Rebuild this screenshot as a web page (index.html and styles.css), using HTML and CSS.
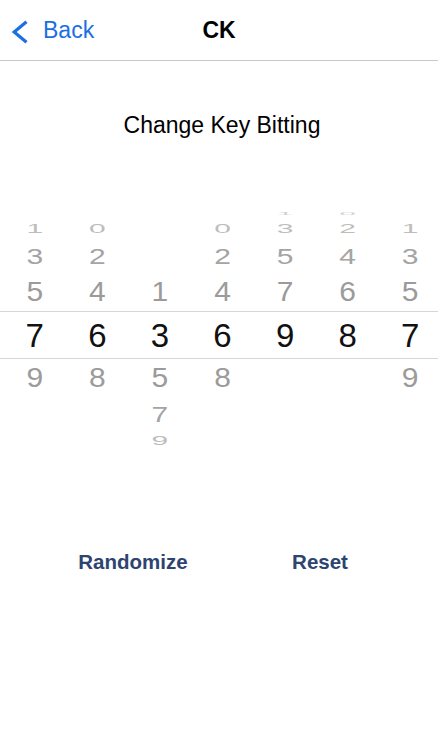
FILE: index.html
```html
<!DOCTYPE html>
<html>
<head>
<meta charset="utf-8">
<title>CK</title>
<link rel="stylesheet" href="styles.css">
</head>
<body>
<div class="nav">
  <div class="nav-left">
    <svg class="chev" viewBox="0 0 18 24" width="18" height="24"><polyline points="15.5,1.8 3.2,12 15.5,22.2" fill="none" stroke="#1a6fe3" stroke-width="3.2" stroke-linejoin="miter" stroke-linecap="butt"/></svg>
    <span class="back">Back</span>
  </div>
  <div class="nav-title">CK</div>
  <div class="nav-right"></div>
</div>

<div class="heading">Change Key Bitting</div>

<div class="picker">
  <div class="col">
    <div class="slot s4"></div><div class="slot s3"><span>1</span></div><div class="slot s2"><span>3</span></div><div class="slot s1"><span>5</span></div><div class="slot s0"><span>7</span></div><div class="slot s1"><span>9</span></div><div class="slot s2"></div><div class="slot s3"></div><div class="slot s4"></div>
  </div>
  <div class="col">
    <div class="slot s4"></div><div class="slot s3"><span>0</span></div><div class="slot s2"><span>2</span></div><div class="slot s1"><span>4</span></div><div class="slot s0"><span>6</span></div><div class="slot s1"><span>8</span></div><div class="slot s2"></div><div class="slot s3"></div><div class="slot s4"></div>
  </div>
  <div class="col">
    <div class="slot s4"></div><div class="slot s3"></div><div class="slot s2"></div><div class="slot s1"><span>1</span></div><div class="slot s0"><span>3</span></div><div class="slot s1"><span>5</span></div><div class="slot s2"><span>7</span></div><div class="slot s3"><span>9</span></div><div class="slot s4"></div>
  </div>
  <div class="col">
    <div class="slot s4"></div><div class="slot s3"><span>0</span></div><div class="slot s2"><span>2</span></div><div class="slot s1"><span>4</span></div><div class="slot s0"><span>6</span></div><div class="slot s1"><span>8</span></div><div class="slot s2"></div><div class="slot s3"></div><div class="slot s4"></div>
  </div>
  <div class="col">
    <div class="slot s4"><span>1</span></div><div class="slot s3"><span>3</span></div><div class="slot s2"><span>5</span></div><div class="slot s1"><span>7</span></div><div class="slot s0"><span>9</span></div><div class="slot s1"></div><div class="slot s2"></div><div class="slot s3"></div><div class="slot s4"></div>
  </div>
  <div class="col">
    <div class="slot s4"><span>0</span></div><div class="slot s3"><span>2</span></div><div class="slot s2"><span>4</span></div><div class="slot s1"><span>6</span></div><div class="slot s0"><span>8</span></div><div class="slot s1"></div><div class="slot s2"></div><div class="slot s3"></div><div class="slot s4"></div>
  </div>
  <div class="col">
    <div class="slot s4"></div><div class="slot s3"><span>1</span></div><div class="slot s2"><span>3</span></div><div class="slot s1"><span>5</span></div><div class="slot s0"><span>7</span></div><div class="slot s1"><span>9</span></div><div class="slot s2"></div><div class="slot s3"></div><div class="slot s4"></div>
  </div>
</div>

<div class="actions">
  <div class="btn">Randomize</div>
  <div class="btn">Reset</div>
</div>
</body>
</html>
```

FILE: styles.css
```css
html, body {
  margin: 0;
  padding: 0;
  background: #ffffff;
}

body {
  width: 438px;
  font-family: "Liberation Sans", Arial, sans-serif;
  color: #000;
}

.nav {
  height: 60px;
  border-bottom: 1px solid #c8c7cc;
  display: grid;
  grid-template-columns: 1fr auto 1fr;
  align-items: center;
}

.nav-left {
  display: flex;
  align-items: center;
  gap: 14px;
  padding-left: 11px;
}

.chev {
  display: block;
  margin-top: 4px;
}

.back {
  font-size: 23px;
  line-height: 60px;
  color: #1a6fe3;
}

.nav-title {
  font-size: 23px;
  font-weight: bold;
  line-height: 60px;
}

.heading {
  margin-top: 50px;
  padding-left: 6px;
  font-size: 23px;
  line-height: 28px;
  text-align: center;
}

.picker {
  margin-top: 70px;
  display: grid;
  grid-template-columns: repeat(7, 1fr);
}

.col {
  display: flex;
  flex-direction: column;
}

.slot {
  display: flex;
  align-items: center;
  justify-content: center;
  padding-left: 7px;
  box-sizing: border-box;
  overflow: visible;
}

.slot span {
  display: inline-block;
  line-height: 1;
}

.s0 {
  height: 48px;
  border-top: 1px solid #d6d6d6;
  border-bottom: 1px solid #d6d6d6;
  font-size: 33px;
  color: #111111;
}

.s1 {
  height: 38px;
  font-size: 30px;
  color: #9b9b9b;
}
.s1 span { transform: scaleY(0.93); }

.s2 {
  height: 34px;
  font-size: 30px;
  color: #a4a4a4;
}
.s2 span { transform: scaleY(0.76); }

.s3 {
  height: 20px;
  font-size: 30px;
  color: #bdbdbd;
}
.s3 span { transform: scaleY(0.4); }

.s4 {
  height: 10px;
  font-size: 30px;
  color: #d2d2d2;
}
.s4 span { transform: scaleY(0.13); }

.actions {
  margin-top: 87px;
  display: grid;
  grid-template-columns: 187px 187px;
  padding-left: 39.5px;
}

.btn {
  text-align: center;
  font-size: 20.5px;
  font-weight: bold;
  line-height: 28px;
  color: #2d4470;
}
```
